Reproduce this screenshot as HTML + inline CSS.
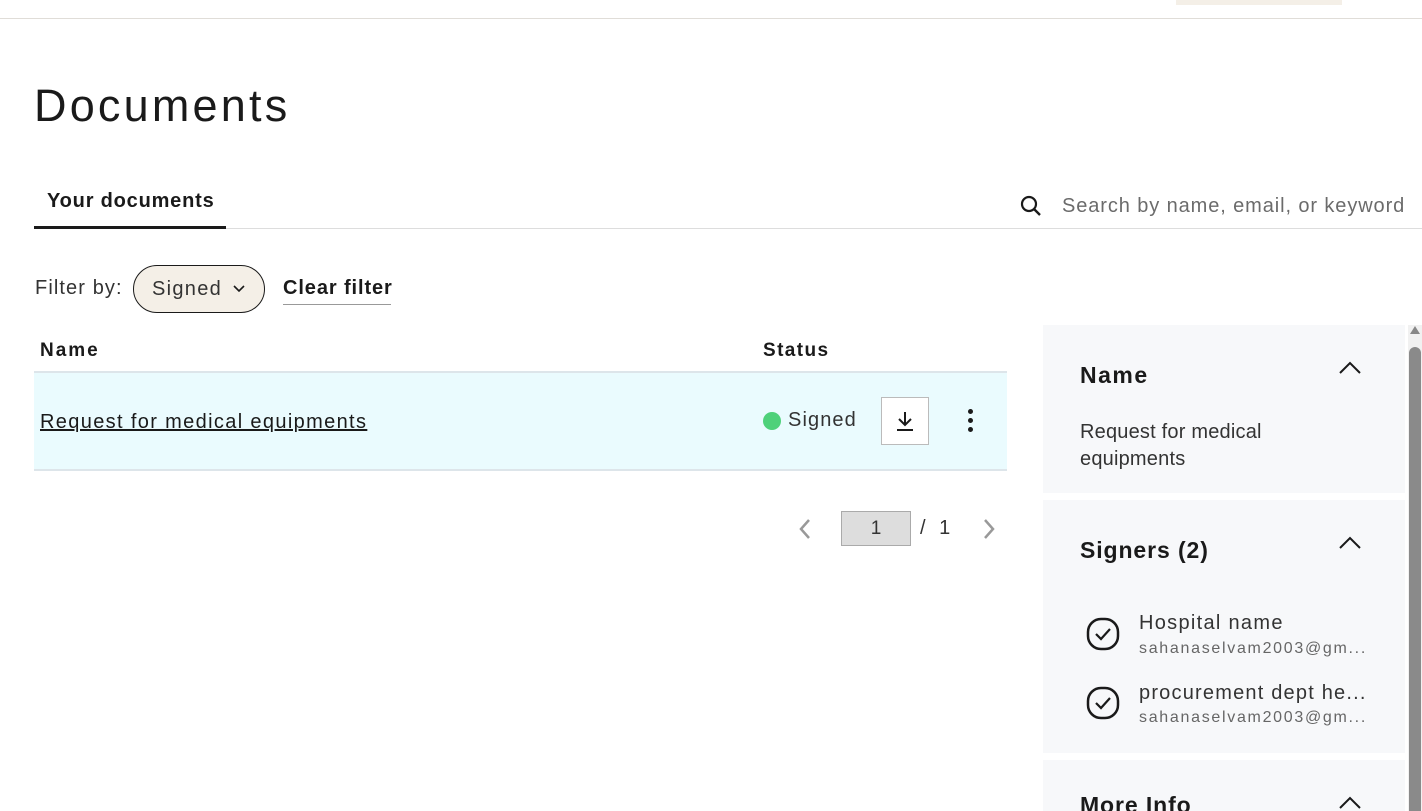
<!DOCTYPE html>
<html><head><style>
*{margin:0;padding:0;box-sizing:border-box}
html,body{width:1422px;height:811px;overflow:hidden}
body{background:#fff;font-family:"Liberation Sans",sans-serif;color:#1a1a1a;position:relative}
.a{position:absolute;white-space:nowrap}
.card{position:absolute;left:1043px;width:362px;background:#f7f8fa}
</style></head><body>
<div class="a" style="left:0;top:18px;width:1422px;height:1px;background:#e0ddd8"></div>
<div class="a" style="left:1176px;top:0;width:166px;height:5px;background:#f4efe7"></div>
<div class="a" style="left:34px;top:80px;font-size:45px;letter-spacing:3.2px">Documents</div>
<div class="a" style="left:47px;top:190px;font-size:20px;font-weight:bold;letter-spacing:0.8px">Your documents</div>
<div class="a" style="left:34px;top:228px;width:1388px;height:1px;background:#ddd"></div>
<div class="a" style="left:34px;top:226px;width:192px;height:3px;background:#1a1a1a"></div>
<svg class="a" style="left:1019px;top:194px" width="24" height="24" viewBox="0 0 24 24"><circle cx="10" cy="10" r="7" fill="none" stroke="#1a1a1a" stroke-width="2.2"/><path d="M15 15l6 6" stroke="#1a1a1a" stroke-width="2.4"/></svg>
<div class="a" style="left:1062px;top:195px;font-size:20px;color:#6b6b6b;letter-spacing:0.9px">Search by name, email, or keyword</div>
<div class="a" style="left:35px;top:277px;font-size:20px;color:#333;letter-spacing:1.1px">Filter by:</div>
<div class="a" style="left:133px;top:265px;width:132px;height:48px;border:1px solid #1a1a1a;border-radius:24px;background:#f4efe7"></div>
<div class="a" style="left:152px;top:278px;font-size:20px;color:#333;letter-spacing:1.3px">Signed</div>
<svg class="a" style="left:232px;top:283px" width="14" height="10" viewBox="0 0 14 10"><path d="M2 3l5 5 5-5" fill="none" stroke="#1a1a1a" stroke-width="1.6"/></svg>
<div class="a" style="left:283px;top:277px;font-size:20px;font-weight:bold;letter-spacing:0.9px">Clear filter</div>
<div class="a" style="left:283px;top:304px;width:108px;height:1px;background:#999"></div>
<div class="a" style="left:40px;top:340px;font-size:19px;font-weight:bold;letter-spacing:2px">Name</div>
<div class="a" style="left:763px;top:340px;font-size:19px;font-weight:bold;letter-spacing:1.4px">Status</div>
<div class="a" style="left:34px;top:371px;width:973px;height:100px;background:#eafbfe;border-top:2px solid #dde5ea;border-bottom:2px solid #dde5ea"></div>
<div class="a" style="left:40px;top:411px;font-size:20px;text-decoration:underline;color:#1a1a1a;letter-spacing:1.35px">Request for medical equipments</div>
<div class="a" style="left:763px;top:412px;width:18px;height:18px;border-radius:50%;background:#4ed17a"></div>
<div class="a" style="left:788px;top:409px;font-size:20px;color:#333;letter-spacing:1.1px">Signed</div>
<div class="a" style="left:881px;top:397px;width:48px;height:48px;background:#fff;border:1px solid #bbb"></div>
<svg class="a" style="left:893px;top:409px" width="24" height="24" viewBox="0 0 24 24"><path d="M12 3v13M6 10l6 6 6-6M4 21h16" fill="none" stroke="#1a1a1a" stroke-width="2"/></svg>
<div class="a" style="left:968px;top:409px;width:5px;height:5px;border-radius:50%;background:#1a1a1a;box-shadow:0 9px 0 #1a1a1a,0 18px 0 #1a1a1a"></div>
<svg class="a" style="left:797px;top:517px" width="16" height="24" viewBox="0 0 16 24"><path d="M12 3l-8 9 8 9" fill="none" stroke="#999" stroke-width="2.5"/></svg>
<div class="a" style="left:841px;top:511px;width:70px;height:35px;background:#ddd;border:1px solid #aaa;text-align:center;font-size:19px;line-height:33px;color:#333">1</div>
<div class="a" style="left:920px;top:517px;font-size:20px;color:#333;letter-spacing:4px">/ 1</div>
<svg class="a" style="left:981px;top:517px" width="16" height="24" viewBox="0 0 16 24"><path d="M4 3l8 9-8 9" fill="none" stroke="#999" stroke-width="2.5"/></svg>
<div class="card" style="top:325px;height:168px"></div>
<div class="card" style="top:500px;height:253px"></div>
<div class="card" style="top:760px;height:60px"></div>
<div class="a" style="left:1080px;top:362px;font-size:23px;font-weight:bold;letter-spacing:1.5px">Name</div>
<div class="a" style="left:1080px;top:419px;font-size:20px;color:#333;line-height:27px;white-space:normal;width:260px;letter-spacing:0.2px">Request for medical equipments</div>
<div class="a" style="left:1080px;top:537px;font-size:23px;font-weight:bold;letter-spacing:0.9px">Signers (2)</div>
<div class="a" style="left:1080px;top:792px;font-size:23px;font-weight:bold;letter-spacing:0.9px">More Info</div>
<svg class="a" style="left:1338px;top:360px" width="24" height="16" viewBox="0 0 24 16"><path d="M2 13l10-10 10 10" fill="none" stroke="#1a1a1a" stroke-width="2"/></svg>
<svg class="a" style="left:1338px;top:535px" width="24" height="16" viewBox="0 0 24 16"><path d="M2 13l10-10 10 10" fill="none" stroke="#1a1a1a" stroke-width="2"/></svg>
<svg class="a" style="left:1338px;top:795px" width="24" height="16" viewBox="0 0 24 16"><path d="M2 13l10-10 10 10" fill="none" stroke="#1a1a1a" stroke-width="2"/></svg>
<svg class="a" style="left:1086px;top:617px" width="34" height="34" viewBox="0 0 34 34"><rect x="2" y="2" width="30" height="30" rx="13" fill="none" stroke="#1a1a1a" stroke-width="2.5"/><path d="M10 17l5 5 9-10" fill="none" stroke="#1a1a1a" stroke-width="2.2"/></svg>
<svg class="a" style="left:1086px;top:686px" width="34" height="34" viewBox="0 0 34 34"><rect x="2" y="2" width="30" height="30" rx="13" fill="none" stroke="#1a1a1a" stroke-width="2.5"/><path d="M10 17l5 5 9-10" fill="none" stroke="#1a1a1a" stroke-width="2.2"/></svg>
<div class="a" style="left:1139px;top:612px;font-size:20px;color:#333;letter-spacing:1.3px">Hospital name</div>
<div class="a" style="left:1139px;top:640px;font-size:16px;color:#666;letter-spacing:1.7px">sahanaselvam2003@gm...</div>
<div class="a" style="left:1139px;top:682px;font-size:20px;color:#333;letter-spacing:1.2px">procurement dept he...</div>
<div class="a" style="left:1139px;top:709px;font-size:16px;color:#666;letter-spacing:1.7px">sahanaselvam2003@gm...</div>
<div class="a" style="left:1408px;top:325px;width:14px;height:486px;background:#f1f1f1"></div>
<svg class="a" style="left:1409px;top:325px" width="12" height="10" viewBox="0 0 12 10"><path d="M6 1l5 8H1z" fill="#888"/></svg>
<div class="a" style="left:1409px;top:347px;width:12px;height:470px;border-radius:6px;background:#8a8a8a"></div>
</body></html>
